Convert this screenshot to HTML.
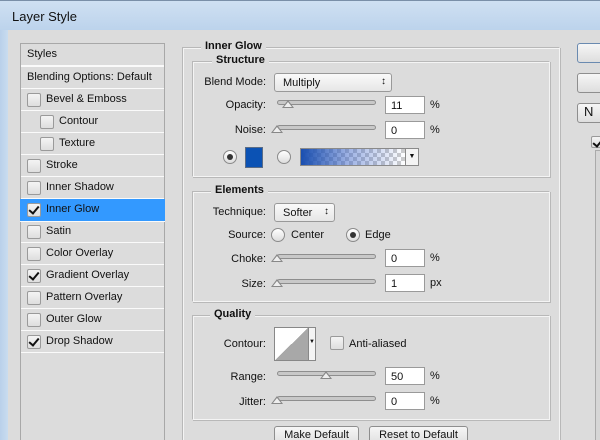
<!DOCTYPE html>
<html style="overflow:hidden;height:440px"><head><style>
*{box-sizing:border-box}
body{margin:0;width:600px;height:440px;overflow:hidden;background:#dcdcdc;font-family:"Liberation Sans",sans-serif;font-size:11px;color:#111;position:relative}
.a{position:absolute}
.title{left:0;top:0;width:600px;height:30px;background:linear-gradient(#cfe0f2,#bcd3ec);border-top:1px solid #7a8fa8}
.title span{position:absolute;left:12px;top:8px;font-size:13px;color:#111}
.lb{left:0;top:30px;width:8px;height:410px;background:linear-gradient(90deg,#b9d0ea,#c9dcef)}
.list{left:20px;top:43px;width:145px;height:400px;border:1px solid #a8a8a8;background:#dcdcdc}
.row{position:absolute;left:0;width:143px;height:22px;border-bottom:1px solid #fafafa;line-height:21px}
.cb{position:absolute;width:14px;height:14px;border:1px solid #9a9a9a;background:linear-gradient(#f4f4f4,#dedede);border-radius:2px}
.ck::after{content:"";position:absolute;left:3px;top:0px;width:4px;height:8px;border:solid #111;border-width:0 2px 2px 0;transform:rotate(40deg)}
.box{border:1px solid #b8b8b8;border-right-color:#f4f4f4;border-bottom-color:#f4f4f4;box-shadow:inset 1px 1px 0 #f4f4f4,1px 1px 0 #b8b8b8}
.lg{position:absolute;background:#dcdcdc;font-weight:bold;padding:0 4px}
.lbl{position:absolute;text-align:right;width:80px}
.trk{position:absolute;width:99px;height:5px;border:1px solid #8e8e8e;border-radius:3px;background:#c8c8c8}
.th{position:absolute;width:0;height:0;border-left:6px solid transparent;border-right:6px solid transparent;border-bottom:8px solid #888}
.th::after{content:"";position:absolute;left:-4px;top:2px;border-left:4px solid transparent;border-right:4px solid transparent;border-bottom:5px solid #eee}
.inp{position:absolute;width:40px;height:18px;background:#fff;border:1px solid #9a9a9a;padding:3px 0 0 5px}
.btn{position:absolute;border:1px solid #8e8e8e;border-radius:3px;background:linear-gradient(#f6f6f6,#dedede);text-align:center;line-height:16px}
.rad{position:absolute;width:14px;height:14px;border-radius:50%;border:1px solid #8a8a8a;background:linear-gradient(#fff,#ddd)}
.rad.on::after{content:"";position:absolute;left:3px;top:3px;width:6px;height:6px;border-radius:50%;background:#333}
.sel{position:absolute;height:19px;border:1px solid #999;border-radius:3px;background:linear-gradient(#fafafa,#e6e6e6);padding:3px 0 0 8px}
.sel::after{content:"\2195";position:absolute;right:5px;top:2px;font-size:10px}
</style></head><body>
<div class="a title"><span>Layer Style</span></div>
<div class="a lb"></div>

<div class="a list">
 <div class="row" style="top:0;height:23px;padding-left:6px;border-bottom:2px solid #fafafa">Styles</div>
 <div class="row" style="top:23px;padding-left:6px">Blending Options: Default</div>
 <div class="row" style="top:45px"><div class="cb" style="left:6px;top:4px"></div><span style="position:absolute;left:25px">Bevel &amp; Emboss</span></div>
 <div class="row" style="top:67px"><div class="cb" style="left:19px;top:4px"></div><span style="position:absolute;left:38px">Contour</span></div>
 <div class="row" style="top:89px"><div class="cb" style="left:19px;top:4px"></div><span style="position:absolute;left:38px">Texture</span></div>
 <div class="row" style="top:111px"><div class="cb" style="left:6px;top:4px"></div><span style="position:absolute;left:25px">Stroke</span></div>
 <div class="row" style="top:133px"><div class="cb" style="left:6px;top:4px"></div><span style="position:absolute;left:25px">Inner Shadow</span></div>
 <div class="row" style="top:155px;background:#3399ff;left:-1px;width:145px;height:23px"><div class="cb ck" style="left:7px;top:4px"></div><span style="position:absolute;left:26px">Inner Glow</span></div>
 <div class="row" style="top:177px"><div class="cb" style="left:6px;top:4px"></div><span style="position:absolute;left:25px">Satin</span></div>
 <div class="row" style="top:199px"><div class="cb" style="left:6px;top:4px"></div><span style="position:absolute;left:25px">Color Overlay</span></div>
 <div class="row" style="top:221px"><div class="cb ck" style="left:6px;top:4px"></div><span style="position:absolute;left:25px">Gradient Overlay</span></div>
 <div class="row" style="top:243px"><div class="cb" style="left:6px;top:4px"></div><span style="position:absolute;left:25px">Pattern Overlay</span></div>
 <div class="row" style="top:265px"><div class="cb" style="left:6px;top:4px"></div><span style="position:absolute;left:25px">Outer Glow</span></div>
 <div class="row" style="top:287px"><div class="cb ck" style="left:6px;top:4px"></div><span style="position:absolute;left:25px">Drop Shadow</span></div>
</div>

<div class="a box" style="left:182px;top:47px;width:378px;height:400px"></div>
<div class="lg" style="left:201px;top:40px">Inner Glow</div>

<div class="a box" style="left:192px;top:61px;width:358px;height:116px"></div>
<div class="lg" style="left:212px;top:54px">Structure</div>
<div class="lbl" style="left:186px;top:76px">Blend Mode:</div>
<div class="sel" style="left:274px;top:73px;width:118px">Multiply</div>
<div class="lbl" style="left:186px;top:99px">Opacity:</div>
<div class="trk" style="left:277px;top:100px"></div><div class="th" style="left:282px;top:100px"></div>
<div class="inp" style="left:385px;top:96px">11</div><div class="a" style="left:430px;top:99px">%</div>
<div class="lbl" style="left:186px;top:124px">Noise:</div>
<div class="trk" style="left:277px;top:125px"></div><div class="th" style="left:271px;top:125px"></div>
<div class="inp" style="left:385px;top:121px">0</div><div class="a" style="left:430px;top:124px">%</div>
<div class="rad on" style="left:223px;top:150px"></div>
<div class="a" style="left:245px;top:147px;width:18px;height:21px;background:#0b52b4;border:1px solid #5a6c86"></div>
<div class="rad" style="left:277px;top:150px"></div>
<div class="a" style="left:300px;top:148px;width:106px;height:18px;border:1px solid #8a8a8a;background:linear-gradient(90deg,#1a4fb0,rgba(60,100,200,.5) 45%,rgba(255,255,255,0) 100%),repeating-conic-gradient(#ccc 0 25%,#fff 0 50%) 0 0/8px 8px"></div>
<div class="a" style="left:405px;top:148px;width:14px;height:18px;border:1px solid #8a8a8a;background:#f4f4f4;font-size:7px;text-align:center;line-height:16px">▼</div>

<div class="a box" style="left:192px;top:191px;width:358px;height:111px"></div>
<div class="lg" style="left:211px;top:184px">Elements</div>
<div class="lbl" style="left:186px;top:206px">Technique:</div>
<div class="sel" style="left:274px;top:203px;width:61px">Softer</div>
<div class="lbl" style="left:186px;top:229px">Source:</div>
<div class="rad" style="left:271px;top:228px"></div><div class="a" style="left:291px;top:229px">Center</div>
<div class="rad on" style="left:346px;top:228px"></div><div class="a" style="left:365px;top:229px">Edge</div>
<div class="lbl" style="left:186px;top:253px">Choke:</div>
<div class="trk" style="left:277px;top:254px"></div><div class="th" style="left:271px;top:254px"></div>
<div class="inp" style="left:385px;top:249px">0</div><div class="a" style="left:430px;top:252px">%</div>
<div class="lbl" style="left:186px;top:278px">Size:</div>
<div class="trk" style="left:277px;top:279px"></div><div class="th" style="left:271px;top:279px"></div>
<div class="inp" style="left:385px;top:274px">1</div><div class="a" style="left:430px;top:277px">px</div>

<div class="a box" style="left:192px;top:315px;width:358px;height:105px"></div>
<div class="lg" style="left:210px;top:308px">Quality</div>
<div class="lbl" style="left:186px;top:338px">Contour:</div>
<div class="a" style="left:274px;top:327px;width:35px;height:34px;border:1px solid #888;background:linear-gradient(to top left,#a8a8a8 50%,#fff 50%)"></div>
<div class="a" style="left:308px;top:327px;width:8px;height:34px;border:1px solid #888;background:#f4f4f4;font-size:6px;text-align:center;line-height:28px">▼</div>
<div class="cb" style="left:330px;top:336px"></div><div class="a" style="left:349px;top:338px">Anti-aliased</div>
<div class="lbl" style="left:186px;top:371px">Range:</div>
<div class="trk" style="left:277px;top:371px"></div><div class="th" style="left:320px;top:371px"></div>
<div class="inp" style="left:385px;top:367px">50</div><div class="a" style="left:430px;top:370px">%</div>
<div class="lbl" style="left:186px;top:396px">Jitter:</div>
<div class="trk" style="left:277px;top:396px"></div><div class="th" style="left:271px;top:396px"></div>
<div class="inp" style="left:385px;top:392px">0</div><div class="a" style="left:430px;top:395px">%</div>

<div class="btn" style="left:274px;top:426px;width:85px;height:20px">Make Default</div>
<div class="btn" style="left:369px;top:426px;width:99px;height:20px">Reset to Default</div>

<div class="btn" style="left:577px;top:43px;width:30px;height:20px;border-color:#6a8ab0"></div>
<div class="btn" style="left:577px;top:73px;width:30px;height:20px"></div>
<div class="btn" style="left:577px;top:103px;width:30px;height:20px;text-align:left;padding-left:6px;font-size:13px">N</div>
<div class="cb ck" style="left:591px;top:136px;width:12px;height:12px"></div>
<div class="a" style="left:595px;top:150px;width:10px;height:300px;border:1px solid #aaa;background:#d6d6d6"></div>
</body></html>
